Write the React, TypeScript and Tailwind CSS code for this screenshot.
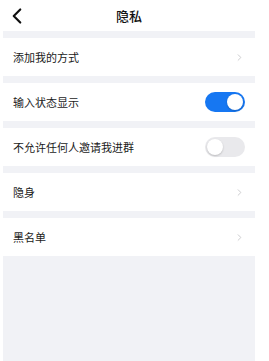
import { ChevronLeft, ChevronRight } from 'lucide-react'

const font = { fontFamily: '"Noto Sans CJK SC", "Noto Sans", sans-serif' }

function Toggle({ on }: { on: boolean }) {
  return (
    <div
      className={`w-[40px] h-[20px] rounded-full p-[2px] flex items-center ${
        on ? 'bg-[#1677f2] justify-end' : 'bg-[#e9e9ec] justify-start'
      }`}
    >
      <div className="w-[16px] h-[16px] rounded-full bg-white shadow-[0_1px_2px_rgba(0,0,0,0.2)]" />
    </div>
  )
}

function Row({ label, toggle }: { label: string; toggle?: boolean }) {
  return (
    <div className="h-[38px] bg-white flex items-center justify-between pl-[10px] pr-[10px]">
      <span className="text-[11px] text-[#1a1a1a]">{label}</span>
      {toggle === undefined ? (
        <ChevronRight className="w-[11px] h-[11px] text-[#c8c8cc]" strokeWidth={2} />
      ) : (
        <Toggle on={toggle} />
      )}
    </div>
  )
}

export default function App() {
  return (
    <div className="h-[361px] w-[269px] bg-white overflow-hidden" style={font}>
      <div className="ml-[3px] w-[252px] h-full flex flex-col">
        <div className="h-[31px] relative flex items-center justify-center bg-white">
          <ChevronLeft className="absolute left-[1px] top-[3px] w-[26px] h-[26px] text-[#111]" strokeWidth={2} />
          <span className="text-[13px] font-medium text-[#111]">隐私</span>
        </div>
        <div className="h-[7px] bg-[#f1f2f6]" />
        <Row label="添加我的方式" />
        <div className="h-[7px] bg-[#f1f2f6]" />
        <Row label="输入状态显示" toggle={true} />
        <div className="h-[7px] bg-[#f1f2f6]" />
        <Row label="不允许任何人邀请我进群" toggle={false} />
        <div className="h-[7px] bg-[#f1f2f6]" />
        <Row label="隐身" />
        <div className="h-[7px] bg-[#f1f2f6]" />
        <Row label="黑名单" />
        <div className="flex-1 bg-[#f1f2f6]" />
      </div>
    </div>
  )
}
